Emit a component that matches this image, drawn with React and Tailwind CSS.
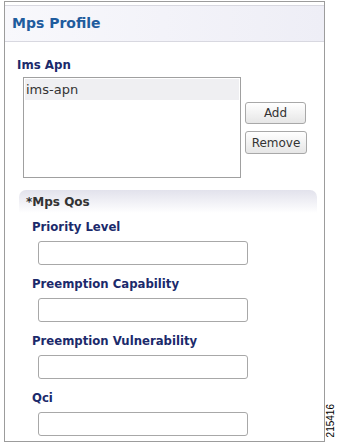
const fields = ['Priority Level', 'Preemption Capability', 'Preemption Vulnerability', 'Qci'];

const Btn = ({ children, className }) => (
  <button
    className={`flex items-center justify-center rounded-[3px] border border-[#a8a8a8] bg-gradient-to-b from-white to-[#e6e6e6] text-[12px] leading-none text-[#333] ${className}`}
  >
    {children}
  </button>
);

export default function App() {
  return (
    <div className="relative h-[443px] w-[338px] overflow-hidden bg-white font-['DejaVu_Sans',sans-serif]">
      <div className="ml-[4px] mt-[1px] flex h-[441px] w-[321px] flex-col overflow-hidden border border-[#9c9c9c]">
        <div className="mt-[3px] flex h-[37px] items-center border-y border-[#d8d8e0] bg-gradient-to-r from-[#f8f8fc] to-[#eeeef6] pb-[1px] pl-[7px]">
          <h1 className="text-[14px] font-bold leading-none text-[#1f5c9e]">Mps Profile</h1>
        </div>

        <div className="ml-[12px] mt-[16px] text-[11.8px] font-bold leading-[14px] text-[#1b2a6b]">Ims Apn</div>
        <div className="mt-[5px] flex">
          <div className="ml-[18px] h-[101px] w-[218px] border border-[#a0a0a0] px-px pt-px">
            <div className="flex h-[21px] items-center bg-[#efeff2] pl-[1px] text-[13px] text-[#333]">ims-apn</div>
          </div>
          <div className="ml-[4px] mt-[25px] flex flex-col gap-[7px]">
            <Btn className="h-[22px] w-[61px]">Add</Btn>
            <Btn className="h-[23px] w-[62px]">Remove</Btn>
          </div>
        </div>

        <div className="ml-[14px] mt-[12px] h-[23px] w-[298px] rounded-t-[7px] bg-gradient-to-b from-[#e2e2ec] to-white pl-[7px] pt-[5px]">
          <div className="text-[12px] font-bold leading-[14px] text-[#333]">*Mps Qos</div>
        </div>

        <div className="mt-[7px] flex flex-col">
          {fields.map((f, i) => (
            <div key={f} className={i > 0 ? 'mt-[12px]' : ''}>
              <div className="ml-[27px] text-[11.7px] font-bold leading-[14px] text-[#1b2a6b]">{f}</div>
              <input className="ml-[33px] mt-[7px] block h-[24px] w-[210px] rounded-[3px] border border-[#a8a8a8] bg-white" />
            </div>
          ))}
        </div>
      </div>

      <div className="absolute left-[326px] top-[404px] rotate-180 font-['Liberation_Sans',sans-serif] text-[10px] leading-[10px] text-black [writing-mode:vertical-rl]">
        215416
      </div>
    </div>
  );
}
